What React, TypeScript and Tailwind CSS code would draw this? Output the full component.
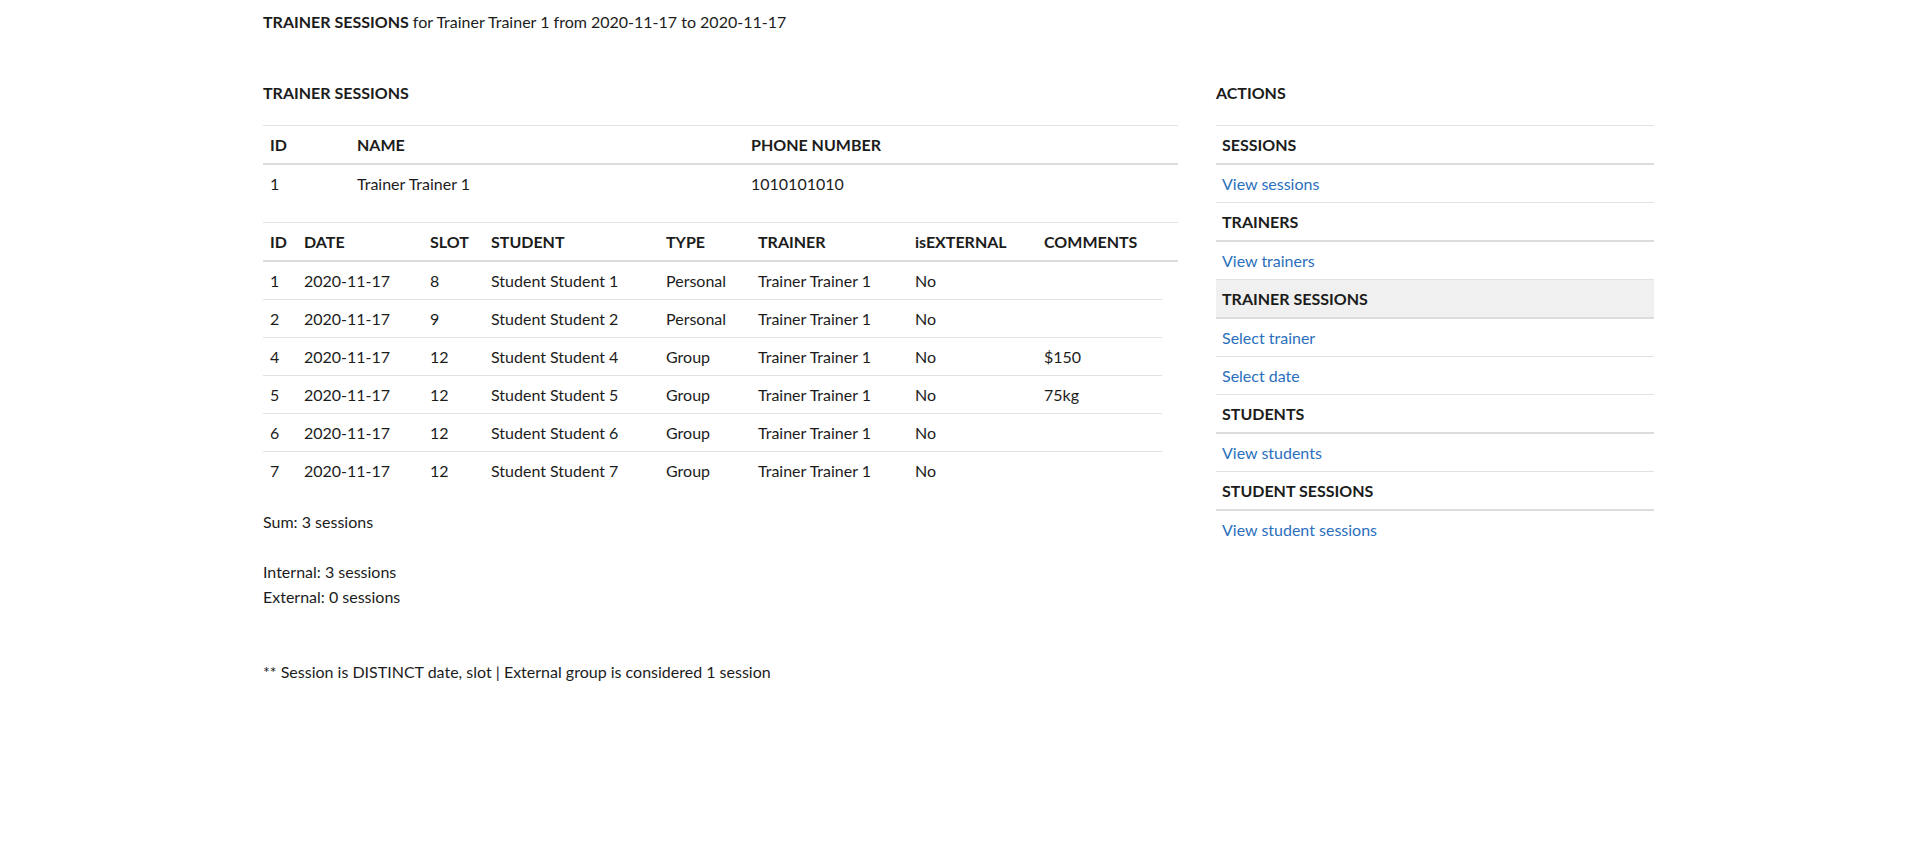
import React from "react";

const font = { fontFamily: "Lato, 'Open Sans', sans-serif" };

const sessions = [
  { id: "1", date: "2020-11-17", slot: "8", student: "Student Student 1", type: "Personal", trainer: "Trainer Trainer 1", ext: "No", comments: "" },
  { id: "2", date: "2020-11-17", slot: "9", student: "Student Student 2", type: "Personal", trainer: "Trainer Trainer 1", ext: "No", comments: "" },
  { id: "4", date: "2020-11-17", slot: "12", student: "Student Student 4", type: "Group", trainer: "Trainer Trainer 1", ext: "No", comments: "$150" },
  { id: "5", date: "2020-11-17", slot: "12", student: "Student Student 5", type: "Group", trainer: "Trainer Trainer 1", ext: "No", comments: "75kg" },
  { id: "6", date: "2020-11-17", slot: "12", student: "Student Student 6", type: "Group", trainer: "Trainer Trainer 1", ext: "No", comments: "" },
  { id: "7", date: "2020-11-17", slot: "12", student: "Student Student 7", type: "Group", trainer: "Trainer Trainer 1", ext: "No", comments: "" },
];

const cols2 = ["w-[34px]", "w-[126px]", "w-[61px]", "w-[175px]", "w-[92px]", "w-[157px]", "w-[129px]", "w-[125px]"];

function Cell({ w, children, bold }: { w: string; children?: React.ReactNode; bold?: boolean }) {
  return (
    <div className={`${w} shrink-0 pl-[7px] h-[37px] flex items-center whitespace-nowrap ${bold ? "font-bold" : ""}`}>
      {children}
    </div>
  );
}

type Item = { label: string; head?: boolean; active?: boolean };
const actions: Item[] = [
  { label: "SESSIONS", head: true },
  { label: "View sessions" },
  { label: "TRAINERS", head: true },
  { label: "View trainers" },
  { label: "TRAINER SESSIONS", head: true, active: true },
  { label: "Select trainer" },
  { label: "Select date" },
  { label: "STUDENTS", head: true },
  { label: "View students" },
  { label: "STUDENT SESSIONS", head: true },
  { label: "View student sessions" },
];

export default function App() {
  return (
    <div className="min-h-[863px] bg-white text-[#1c1c1c] text-[16px]" style={font}>
      <div className="pl-[263px] pt-[11px]">
        <div className="leading-[22px]">
          <span className="font-bold">TRAINER SESSIONS</span> for Trainer Trainer 1 from 2020-11-17 to 2020-11-17
        </div>
        <div className="flex gap-[38px] mt-[49px]">
          {/* Left column */}
          <div className="w-[915px]">
            <div className="font-bold leading-[22px] h-[43px]">TRAINER SESSIONS</div>
            {/* Table 1 */}
            <div className="border-t border-[#e2e2e2]">
              <div className="flex border-b-2 border-[#dcdcdc]">
                <Cell w="w-[87px]" bold>ID</Cell>
                <Cell w="w-[394px]" bold>NAME</Cell>
                <Cell w="w-[434px]" bold>PHONE NUMBER</Cell>
              </div>
              <div className="flex">
                <Cell w="w-[87px]">1</Cell>
                <Cell w="w-[394px]">Trainer Trainer 1</Cell>
                <Cell w="w-[434px]">1010101010</Cell>
              </div>
            </div>
            {/* Table 2 */}
            <div className="mt-[20px] border-t border-[#e2e2e2]">
              <div className="flex border-b-2 border-[#dcdcdc]">
                <Cell w={cols2[0]} bold>ID</Cell>
                <Cell w={cols2[1]} bold>DATE</Cell>
                <Cell w={cols2[2]} bold>SLOT</Cell>
                <Cell w={cols2[3]} bold>STUDENT</Cell>
                <Cell w={cols2[4]} bold>TYPE</Cell>
                <Cell w={cols2[5]} bold>TRAINER</Cell>
                <Cell w={cols2[6]} bold>isEXTERNAL</Cell>
                <Cell w="w-[141px]" bold>COMMENTS</Cell>
              </div>
              <div className="mr-[16px]">
                {sessions.map((s, i) => (
                  <div key={s.id} className={`flex ${i > 0 ? "border-t border-[#e2e2e2]" : ""}`}>
                    <Cell w={cols2[0]}>{s.id}</Cell>
                    <Cell w={cols2[1]}>{s.date}</Cell>
                    <Cell w={cols2[2]}>{s.slot}</Cell>
                    <Cell w={cols2[3]}>{s.student}</Cell>
                    <Cell w={cols2[4]}>{s.type}</Cell>
                    <Cell w={cols2[5]}>{s.trainer}</Cell>
                    <Cell w={cols2[6]}>{s.ext}</Cell>
                    <Cell w={cols2[7]}>{s.comments}</Cell>
                  </div>
                ))}
              </div>
            </div>
            <div className="mt-[20px] leading-[25px]">
              <p>Sum: 3 sessions</p>
              <p className="mt-[25px]">Internal: 3 sessions</p>
              <p>External: 0 sessions</p>
              <p className="mt-[50px]">** Session is DISTINCT date, slot | External group is considered 1 session</p>
            </div>
          </div>
          {/* Right column */}
          <div className="w-[438px]">
            <div className="font-bold leading-[22px] h-[43px]">ACTIONS</div>
            <div className="border-t border-[#e2e2e2]">
              {actions.map((a, i) => {
                const last = i === actions.length - 1;
                let border = "";
                if (a.head) border = "border-b-2 border-[#dcdcdc]";
                else if (!last) border = "border-b border-[#e2e2e2]";
                return (
                  <div
                    key={a.label}
                    className={`${a.head ? "h-[39px]" : "h-[38px]"} ${border} ${a.active ? "bg-[#f0f0f0]" : ""} pl-[6px] flex items-center`}
                  >
                    {a.head ? (
                      <span className="font-bold">{a.label}</span>
                    ) : (
                      <a href="#" className="text-[#2b6fbd]">{a.label}</a>
                    )}
                  </div>
                );
              })}
            </div>
          </div>
        </div>
      </div>
    </div>
  );
}
